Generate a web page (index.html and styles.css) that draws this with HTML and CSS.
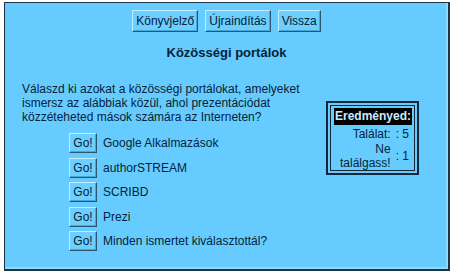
FILE: index.html
```html
<!DOCTYPE html>
<html lang="hu">
<head>
<meta charset="utf-8">
<title>Közösségi portálok</title>
<link rel="stylesheet" href="styles.css">
</head>
<body>
<div class="frame">
  <div class="nav">
    <button class="btn">Könyvjelző</button>
    <button class="btn">Újraindítás</button>
    <button class="btn">Vissza</button>
  </div>
  <h1 class="title">Közösségi portálok</h1>
  <div class="main">
    <div class="left">
      <p class="intro">Válaszd ki azokat a közösségi portálokat, amelyeket<br>ismersz az alábbiak közül, ahol prezentációdat<br>közzéteheted mások számára az Interneten?</p>
      <ul class="options">
        <li class="option"><button class="go">Go!</button><span class="label">Google Alkalmazások</span></li>
        <li class="option"><button class="go">Go!</button><span class="label">authorSTREAM</span></li>
        <li class="option"><button class="go">Go!</button><span class="label">SCRIBD</span></li>
        <li class="option"><button class="go">Go!</button><span class="label">Prezi</span></li>
        <li class="option"><button class="go">Go!</button><span class="label">Minden ismertet kiválasztottál?</span></li>
      </ul>
    </div>
    <div class="score">
      <div class="score-inner">
        <div class="score-head">Eredményed:</div>
        <div class="score-row score-row-first">
          <span class="score-label">Találat:</span><span class="score-val">: 5</span>
        </div>
        <div class="score-row score-row-second">
          <span class="score-label">Ne<br>találgass!</span><span class="score-val">: 1</span>
        </div>
      </div>
    </div>
  </div>
</div>
</body>
</html>
```

FILE: styles.css
```css
html, body {
  margin: 0;
  padding: 0;
  background: #ffffff;
}
body {
  font-family: "Liberation Sans", Arial, sans-serif;
  font-size: 12px;
  color: #062238;
}
.frame {
  margin: 2px 0 0 4px;
  width: 443px;
  height: 266px;
  background: #66ccff;
  border: 1px solid #1c3444;
  border-right-width: 2px;
  border-bottom-width: 2px;
  box-shadow: inset -2px -2px 0 #8fd9ff;
  display: flex;
  flex-direction: column;
}
.nav {
  display: flex;
  justify-content: center;
  gap: 7px;
  padding-top: 7px;
}
.btn, .go {
  font-family: "Liberation Sans", Arial, sans-serif;
  font-size: 12px;
  color: #062238;
  background: #6ccfff;
  border: 1px solid;
  border-color: #c4ecff #2b5670 #2b5670 #c4ecff;
  box-shadow: inset -1px -1px 0 #4aa6d6;
  margin: 0;
  cursor: pointer;
}
.btn {
  height: 22px;
  padding: 0 3px;
}
.title {
  margin: 13px 0 0;
  font-size: 13px;
  line-height: 16px;
  font-weight: bold;
  text-align: center;
}
.main {
  display: flex;
  align-items: flex-start;
}
.left {
  width: 304px;
  padding-left: 17px;
}
.intro {
  margin: 21px 0 0;
  line-height: 14px;
}
.options {
  list-style: none;
  margin: 9px 0 0;
  padding: 0 0 0 47px;
  display: flex;
  flex-direction: column;
  gap: 4.5px;
}
.option {
  display: flex;
  align-items: center;
  gap: 6px;
}
.go {
  width: 28px;
  height: 20px;
  padding: 0;
}
.score {
  margin-top: 40px;
  width: 85px;
  border: 2px solid #14283a;
  padding: 2px;
}
.score-inner {
  border: 1px solid #14283a;
  padding: 2px 2px 0 3px;
}
.score-head {
  background: #000000;
  color: #c9ecff;
  font-weight: bold;
  line-height: 17px;
  text-align: center;
}
.score-row {
  display: flex;
  justify-content: flex-end;
  align-items: center;
  padding-right: 3px;
  line-height: 14px;
}
.score-row-first {
  margin-top: 2px;
}
.score-row-second {
  margin-top: 1px;
}
.score-label {
  text-align: right;
}
.score-val {
  flex-shrink: 0;
  white-space: nowrap;
  margin-left: 5px;
}
```
